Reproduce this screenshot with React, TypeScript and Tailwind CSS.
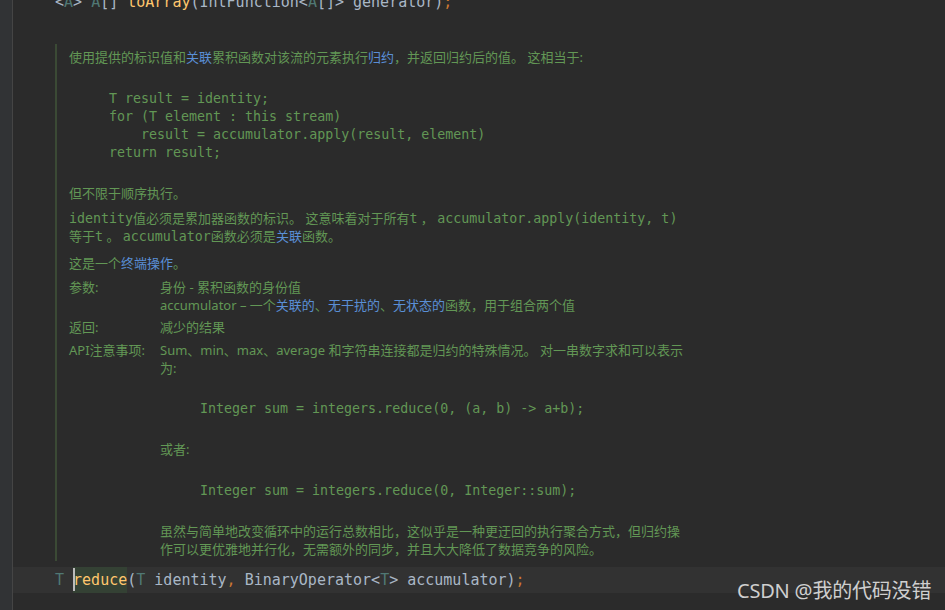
import React from "react";

const mono = "font-['DejaVu_Sans_Mono',monospace]";
const sans = "font-['Noto_Sans','Noto_Sans_CJK_SC',sans-serif]";

const L = ({ children }: { children: React.ReactNode }) => (
  <span className="text-[#5a8fd6]">{children}</span>
);
const M = ({ children }: { children: React.ReactNode }) => (
  <span className={"text-[13.3px] leading-none " + mono}>{children}</span>
);
const Ln = ({ children, className = "" }: { children: React.ReactNode; className?: string }) => (
  <div className={"h-[18px] overflow-visible leading-[18px] " + className}>{children}</div>
);

const Tp = ({ children }: { children: React.ReactNode }) => (
  <span className="text-[#507874]">{children}</span>
);
const Gr = ({ children }: { children: React.ReactNode }) => (
  <span className="text-[#a9b7c6]">{children}</span>
);
const Or = ({ children }: { children: React.ReactNode }) => (
  <span className="text-[#cc7832]">{children}</span>
);

export default function App() {
  return (
    <div className="relative flex h-[610px] w-[945px] overflow-hidden bg-[#2b2b2b]">
      <div className="w-[13px] shrink-0 border-r border-[#454545] bg-[#313335]" />
      <div className="flex min-w-0 flex-1 flex-col">
        {/* partially visible top line */}
        <div className="h-[15px] shrink-0 overflow-hidden">
          <div className={"mt-[-11px] h-[26px] whitespace-pre pl-[42px] text-[15px] leading-[26px] " + mono}>
            <Gr>&lt;</Gr>
            <Tp>A</Tp>
            <Gr>&gt; </Gr>
            <Tp>A</Tp>
            <Gr>[] </Gr>
            <span className="text-[#ffc66d]">toArray</span>
            <Gr>(IntFunction&lt;</Gr>
            <Tp>A</Tp>
            <Gr>[]&gt; generator)</Gr>
            <Or>;</Or>
          </div>
        </div>

        {/* rendered doc */}
        <div
          className={
            "ml-[42px] mt-[29px] w-[660px] shrink-0 border-l-2 border-[#3b4a35] pb-[3px] pl-[12px] pt-[4px] text-[13px] leading-[18px] text-[#629755] whitespace-nowrap " +
            sans
          }
        >
          <Ln>
            使用提供的标识值和<L>关联</L>累积函数对该流的元素执行<L>归约</L>，并返回归约后的值。 这相当于:
          </Ln>
          <div className={"mt-[24px] whitespace-pre pl-[40px] text-[13.3px] " + mono}>
            <Ln>T result = identity;</Ln>
            <Ln>for (T element : this stream)</Ln>
            <Ln>    result = accumulator.apply(result, element)</Ln>
            <Ln>return result;</Ln>
          </div>
          <Ln className="mt-[22px]">但不限于顺序执行。</Ln>
          <div className="mt-[7px]">
            <Ln>
              <M>identity</M>值必须是累加器函数的标识。 这意味着对于所有<M>t</M> ， <M>accumulator.apply(identity, t)</M>
            </Ln>
            <Ln>
              等于<M>t</M> 。 <M>accumulator</M>函数必须是<L>关联</L>函数。
            </Ln>
          </div>
          <Ln className="mt-[9px]">
            这是一个<L>终端操作</L>。
          </Ln>

          <div className="mt-[6px] flex">
            <Ln className="w-[91px] shrink-0">参数:</Ln>
            <div>
              <Ln>身份 - 累积函数的身份值</Ln>
              <Ln>
                accumulator – 一个<L>关联的</L>、<L>无干扰的</L>、<L>无状态的</L>函数，用于组合两个值
              </Ln>
            </div>
          </div>
          <div className="mt-[4px] flex">
            <Ln className="w-[91px] shrink-0">返回:</Ln>
            <Ln>减少的结果</Ln>
          </div>
          <div className="mt-[5px] flex">
            <Ln className="w-[91px] shrink-0">API注意事项:</Ln>
            <div>
              <Ln>Sum、min、max、average 和字符串连接都是归约的特殊情况。 对一串数字求和可以表示</Ln>
              <Ln>为:</Ln>
              <Ln className={"mt-[23px] whitespace-pre pl-[40px] text-[13.3px] " + mono}>
                Integer sum = integers.reduce(0, (a, b) -&gt; a+b);
              </Ln>
              <Ln className="mt-[22px]">或者:</Ln>
              <Ln className={"mt-[24px] whitespace-pre pl-[40px] text-[13.3px] " + mono}>
                Integer sum = integers.reduce(0, Integer::sum);
              </Ln>
              <div className="mt-[22px]">
                <Ln>虽然与简单地改变循环中的运行总数相比，这似乎是一种更迂回的执行聚合方式，但归约操</Ln>
                <Ln>作可以更优雅地并行化，无需额外的同步，并且大大降低了数据竞争的风险。</Ln>
              </div>
            </div>
          </div>
        </div>

        {/* current line */}
        <div
          className={
            "mt-[6px] h-[26px] shrink-0 whitespace-pre bg-[#323232] pl-[42px] text-[15px] leading-[26px] " + mono
          }
        >
          <Tp>T</Tp>
          <Gr> </Gr>
          <span className="relative inline-block h-[26px] bg-[#344134] align-top text-[#ffc66d]">
            <span className="absolute left-0 top-[1px] h-[23px] w-[2px] bg-[#bbbbbb]" />
            reduce
          </span>
          <Gr>(</Gr>
          <Tp>T</Tp>
          <Gr> identity</Gr>
          <Or>, </Or>
          <Gr>BinaryOperator&lt;</Gr>
          <Tp>T</Tp>
          <Gr>&gt; accumulator)</Gr>
          <Or>;</Or>
        </div>
      </div>

      <div
        className={
          "absolute left-[737px] top-[577px] whitespace-nowrap text-[20px] leading-[28px] text-[#cfcfcf] tracking-[-0.2px] " + sans
        }
      >
        CSDN @我的代码没错
      </div>
    </div>
  );
}
